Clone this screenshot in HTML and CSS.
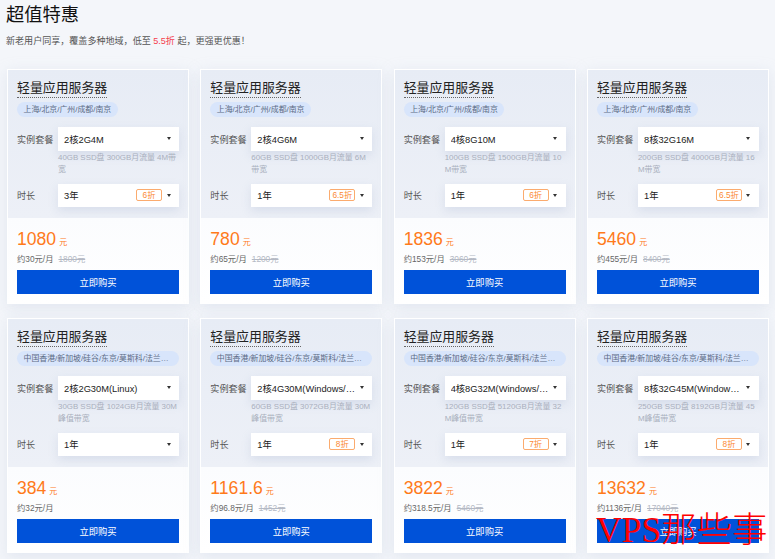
FILE: index.html
```html
<!DOCTYPE html>
<html lang="zh-CN">
<head>
<meta charset="utf-8">
<title>超值特惠</title>
<link rel="stylesheet" href="styles.css">
</head>
<body>
<header class="head">
  <h1>超值特惠</h1>
  <p>新老用户同享，覆盖多种地域，低至 <em>5.5折</em> 起，更强更优惠！</p>
</header>
<main class="grid">
  <article class="card">
    <div class="top">
      <h2><span>轻量应用服务器</span></h2>
      <div class="tags"><span class="tag">上海/北京/广州/成都/南京</span></div>
      <div class="row"><span class="lab">实例套餐</span><div class="sel"><span class="val">2核2G4M</span><i class="arr"></i></div></div>
      <p class="spec">40GB SSD盘 300GB月流量 4M带宽</p>
      <div class="row"><span class="lab">时长</span><div class="sel"><span class="val">3年</span><b class="off">6折</b><i class="arr"></i></div></div>
    </div>
    <div class="bot">
      <div class="price">1080<small>元</small></div>
      <div class="per">约30元/月<s>1800元</s></div>
      <button class="buy">立即购买</button>
    </div>
  </article>
  <article class="card">
    <div class="top">
      <h2><span>轻量应用服务器</span></h2>
      <div class="tags"><span class="tag">上海/北京/广州/成都/南京</span></div>
      <div class="row"><span class="lab">实例套餐</span><div class="sel"><span class="val">2核4G6M</span><i class="arr"></i></div></div>
      <p class="spec">60GB SSD盘 1000GB月流量 6M带宽</p>
      <div class="row"><span class="lab">时长</span><div class="sel"><span class="val">1年</span><b class="off">6.5折</b><i class="arr"></i></div></div>
    </div>
    <div class="bot">
      <div class="price">780<small>元</small></div>
      <div class="per">约65元/月<s>1200元</s></div>
      <button class="buy">立即购买</button>
    </div>
  </article>
  <article class="card">
    <div class="top">
      <h2><span>轻量应用服务器</span></h2>
      <div class="tags"><span class="tag">上海/北京/广州/成都/南京</span></div>
      <div class="row"><span class="lab">实例套餐</span><div class="sel"><span class="val">4核8G10M</span><i class="arr"></i></div></div>
      <p class="spec">100GB SSD盘 1500GB月流量 10M带宽</p>
      <div class="row"><span class="lab">时长</span><div class="sel"><span class="val">1年</span><b class="off">6折</b><i class="arr"></i></div></div>
    </div>
    <div class="bot">
      <div class="price">1836<small>元</small></div>
      <div class="per">约153元/月<s>3060元</s></div>
      <button class="buy">立即购买</button>
    </div>
  </article>
  <article class="card">
    <div class="top">
      <h2><span>轻量应用服务器</span></h2>
      <div class="tags"><span class="tag">上海/北京/广州/成都/南京</span></div>
      <div class="row"><span class="lab">实例套餐</span><div class="sel"><span class="val">8核32G16M</span><i class="arr"></i></div></div>
      <p class="spec">200GB SSD盘 4000GB月流量 16M带宽</p>
      <div class="row"><span class="lab">时长</span><div class="sel"><span class="val">1年</span><b class="off">6.5折</b><i class="arr"></i></div></div>
    </div>
    <div class="bot">
      <div class="price">5460<small>元</small></div>
      <div class="per">约455元/月<s>8400元</s></div>
      <button class="buy">立即购买</button>
    </div>
  </article>
  <article class="card">
    <div class="top">
      <h2><span>轻量应用服务器</span></h2>
      <div class="tags"><span class="tag wide">中国香港/新加坡/硅谷/东京/莫斯科/法兰克福/首尔</span></div>
      <div class="row"><span class="lab">实例套餐</span><div class="sel"><span class="val">2核2G30M(Linux)</span><i class="arr"></i></div></div>
      <p class="spec">30GB SSD盘 1024GB月流量 30M峰值带宽</p>
      <div class="row"><span class="lab">时长</span><div class="sel"><span class="val">1年</span><i class="arr"></i></div></div>
    </div>
    <div class="bot">
      <div class="price">384<small>元</small></div>
      <div class="per">约32元/月</div>
      <button class="buy">立即购买</button>
    </div>
  </article>
  <article class="card">
    <div class="top">
      <h2><span>轻量应用服务器</span></h2>
      <div class="tags"><span class="tag wide">中国香港/新加坡/硅谷/东京/莫斯科/法兰克福/首尔</span></div>
      <div class="row"><span class="lab">实例套餐</span><div class="sel"><span class="val">2核4G30M(Windows/Linux)</span><i class="arr"></i></div></div>
      <p class="spec">60GB SSD盘 3072GB月流量 30M峰值带宽</p>
      <div class="row"><span class="lab">时长</span><div class="sel"><span class="val">1年</span><b class="off">8折</b><i class="arr"></i></div></div>
    </div>
    <div class="bot">
      <div class="price">1161.6<small>元</small></div>
      <div class="per">约96.8元/月<s>1452元</s></div>
      <button class="buy">立即购买</button>
    </div>
  </article>
  <article class="card">
    <div class="top">
      <h2><span>轻量应用服务器</span></h2>
      <div class="tags"><span class="tag wide">中国香港/新加坡/硅谷/东京/莫斯科/法兰克福/首尔</span></div>
      <div class="row"><span class="lab">实例套餐</span><div class="sel"><span class="val">4核8G32M(Windows/Linux)</span><i class="arr"></i></div></div>
      <p class="spec">120GB SSD盘 5120GB月流量 32M峰值带宽</p>
      <div class="row"><span class="lab">时长</span><div class="sel"><span class="val">1年</span><b class="off">7折</b><i class="arr"></i></div></div>
    </div>
    <div class="bot">
      <div class="price">3822<small>元</small></div>
      <div class="per">约318.5元/月<s>5460元</s></div>
      <button class="buy">立即购买</button>
    </div>
  </article>
  <article class="card">
    <div class="top">
      <h2><span>轻量应用服务器</span></h2>
      <div class="tags"><span class="tag wide">中国香港/新加坡/硅谷/东京/莫斯科/法兰克福/首尔</span></div>
      <div class="row"><span class="lab">实例套餐</span><div class="sel"><span class="val">8核32G45M(Windows/Linux)</span><i class="arr"></i></div></div>
      <p class="spec">250GB SSD盘 8192GB月流量 45M峰值带宽</p>
      <div class="row"><span class="lab">时长</span><div class="sel"><span class="val">1年</span><b class="off">8折</b><i class="arr"></i></div></div>
    </div>
    <div class="bot">
      <div class="price">13632<small>元</small></div>
      <div class="per">约1136元/月<s>17040元</s></div>
      <button class="buy">立即购买</button>
    </div>
  </article>
</main>
<div class="mark">VPS那些事</div>
</body>
</html>
```
FILE: styles.css
```css
* { box-sizing: border-box; }
html, body { height: 100%; }
body {
  margin: 0;
  background: #f4f6fa;
  color: #333;
  font-family: "Liberation Sans", "Noto Sans CJK SC", sans-serif;
  overflow: hidden;
  position: relative;
}
.head { padding: 0 6px; height: 69px; }
.head h1 {
  margin: 0;
  padding-top: 3px;
  font-size: 18.3px;
  line-height: 24px;
  font-weight: 400;
  color: #111;
}
.head p {
  margin: 7px 0 0;
  font-size: 9.05px;
  line-height: 14px;
  color: #555;
}
.head em { font-style: normal; color: #f5404d; }
.grid {
  display: grid;
  grid-template-columns: repeat(4, 182px);
  column-gap: 11.33px;
  row-gap: 14px;
  padding: 0 7px;
}
.card {
  height: 235px;
  background: #fff;
  border: 1px solid #fff;
  box-shadow: 0 4px 14px rgba(190, 200, 222, .35);
  display: flex;
  flex-direction: column;
}
.top {
  height: 148px;
  padding: 9px 9px 0;
  background: #e9edf6;
  background-image: linear-gradient(180deg, #e7ecf5, #edf0f7);
}
.top h2 { margin: 0; font-size: 12.9px; line-height: 18px; font-weight: 400; color: #222; }
.top h2 span { display: inline-block; border-bottom: 1px dotted #666; padding-bottom: 0; }
.tags { display: flex; margin-top: 4px; }
.tag {
  display: block;
  height: 15px;
  line-height: 15px;
  padding: 0 6.5px;
  border-radius: 8px;
  background: #d8e5fb;
  color: #5c6b85;
  font-size: 7.9px;
  white-space: nowrap;
  overflow: hidden;
  text-overflow: ellipsis;
}
.tag.wide { width: 100%; padding-right: 9px; }
.row { display: flex; align-items: center; }
.tags + .row { margin-top: 10px; }
.spec + .row { margin-top: 8px; }
.lab { width: 41px; flex: none; font-size: 9.1px; color: #555; }
.sel {
  flex: 1;
  min-width: 0;
  height: 23.5px;
  background: #fff;
  display: flex;
  align-items: center;
  padding: 0 8.5px 0 6px;
  box-shadow: 0 4px 10px rgba(170, 182, 210, .3);
}
.val {
  flex: 1;
  min-width: 0;
  font-size: 9.3px;
  color: #222;
  white-space: nowrap;
  overflow: hidden;
  text-overflow: ellipsis;
}
.off {
  flex: none;
  width: 26px;
  height: 12px;
  line-height: 10px;
  margin: 0 1.5px 0 4px;
  border: 1px solid #fbab6e;
  border-radius: 2px;
  text-align: center;
  font-size: 8.3px;
  font-weight: 400;
  color: #fb8a34;
}
.arr {
  flex: none;
  width: 0;
  height: 0;
  margin-left: 3px;
  border-left: 2.5px solid transparent;
  border-right: 2.5px solid transparent;
  border-top: 3px solid #333;
}
.spec {
  margin: 0;
  margin-left: 41px;
  padding-top: 1px;
  font-size: 7.9px;
  line-height: 12px;
  color: #a9afbd;
  word-break: break-all;
}
.bot {
  flex: 1;
  padding: 10px 9px 0;
  background: linear-gradient(180deg, #fbfcfe, #fff);
}
.price { font-size: 17.6px; line-height: 22px; color: #ff7a1a; }
.price small { font-size: 8px; margin-left: 3px; }
.per { font-size: 8.3px; line-height: 12px; color: #666; margin-top: -1px; }
.per s { color: #b4b9c4; margin-left: 5px; }
.buy {
  display: block;
  width: 100%;
  height: 24px;
  margin-top: 5px;
  padding: 0;
  border: 0;
  background: #0052d9;
  color: #fff;
  font: inherit;
  font-size: 9.3px;
}
.mark {
  position: absolute;
  left: 596px;
  top: 510px;
  color: #f00;
  font-family: "Liberation Serif", "Noto Sans CJK SC", serif;
  font-size: 35.5px;
  font-weight: 300;
  line-height: 40px;
  white-space: nowrap;
}
```
